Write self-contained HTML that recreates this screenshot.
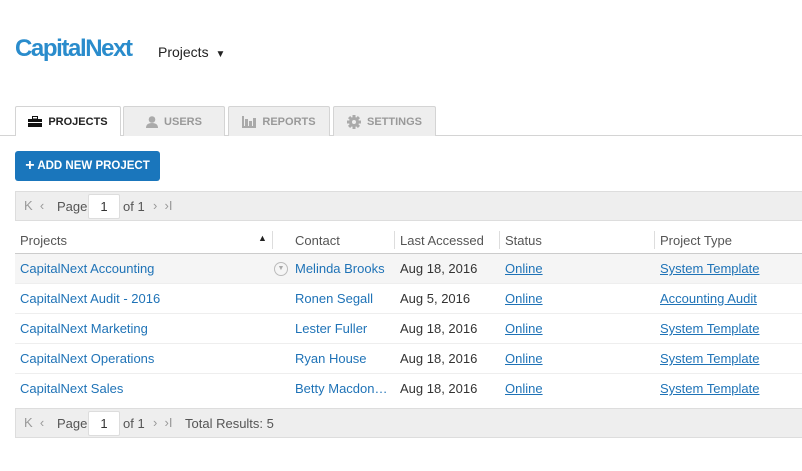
<!DOCTYPE html>
<html><head><style>
*{margin:0;padding:0;box-sizing:border-box}
body{width:802px;height:471px;overflow:hidden;background:#fff;font-family:"Liberation Sans",sans-serif;font-size:13px;color:#333;position:relative}
.a{position:absolute;white-space:nowrap}
.logo{left:15px;top:35px;font-size:24px;font-weight:bold;color:#2a8ccc;letter-spacing:-1.4px}
.tab{position:absolute;top:106px;height:30px;border:1px solid #d4d4d4;border-bottom:none;background:#eee;color:#999;font-size:11px;font-weight:bold;display:flex;align-items:center;justify-content:center;gap:6px;border-radius:2px 2px 0 0}
.tab.on{background:#fff;color:#222;height:30px;z-index:2}
.pager{position:absolute;left:15px;width:800px;height:30px;background:#eee;border:1px solid #ddd;color:#555;font-size:13px}
.inp{position:absolute;left:72px;top:2px;width:32px;height:25px;background:#fff;border:1px solid #ddd;border-radius:2px;text-align:center;line-height:23px;color:#333}
.lnk{color:#1f73b7}
.u{text-decoration:underline}
.row{position:absolute;left:15px;width:787px;height:30px;border-bottom:1px solid #eee}
.row span{position:absolute;top:7px}
</style></head><body>
<div class="a logo">CapitalNext</div>
<div class="a" style="left:158px;top:44px;font-size:14px;color:#222">Projects <span style="font-size:10px;margin-left:3px">▼</span></div>
<div class="a" style="left:0;top:135px;width:802px;height:1px;background:#d4d4d4"></div>
<div class="tab on" style="left:15px;width:106px"><svg width="14" height="11" viewBox="0 0 14 11"><rect x="4.5" y="0.5" width="5" height="2.5" fill="none" stroke="#111"/><rect x="0" y="3" width="14" height="8" fill="#111"/><rect x="0" y="6" width="14" height="1" fill="#fff"/></svg>PROJECTS</div>
<div class="tab" style="left:123px;width:102px"><svg width="12" height="12" viewBox="0 0 12 12"><circle cx="6" cy="3.5" r="3.3" fill="#aaa"/><path d="M0 12 Q0 7 6 7 Q12 7 12 12Z" fill="#aaa"/></svg>USERS</div>
<div class="tab" style="left:228px;width:102px"><svg width="14" height="12" viewBox="0 0 14 12"><rect x="0" y="0" width="2" height="12" fill="#aaa"/><rect x="3" y="3" width="3" height="8" fill="#aaa"/><rect x="7" y="5" width="3" height="6" fill="#aaa"/><rect x="11" y="2" width="3" height="9" fill="#aaa"/><rect x="0" y="10" width="14" height="2" fill="#aaa"/></svg>REPORTS</div>
<div class="tab" style="left:333px;width:103px"><svg width="14" height="14" viewBox="0 0 14 14"><g fill="#aaa"><circle cx="7" cy="7" r="5"/><rect x="5.5" y="0" width="3" height="14"/><rect x="0" y="5.5" width="14" height="3"/><rect x="5.5" y="0" width="3" height="14" transform="rotate(45 7 7)"/><rect x="5.5" y="0" width="3" height="14" transform="rotate(-45 7 7)"/></g><circle cx="7" cy="7" r="2" fill="#eee"/></svg>SETTINGS</div>
<div class="a" style="left:15px;top:151px;width:145px;height:30px;background:#1a76bc;border-radius:3px;color:#fff;font-size:11.5px;font-weight:bold;line-height:30px;text-align:center"><span style="font-size:16px;vertical-align:-1px">+</span> ADD NEW PROJECT</div>
<div class="pager" style="top:191px">
<span class="a" style="left:8px;top:6px;color:#999">K&nbsp; ‹</span><span class="a" style="left:41px;top:7px">Page</span><div class="inp">1</div><span class="a" style="left:107px;top:7px">of 1</span><span class="a" style="left:137px;top:6px;color:#999">›&nbsp; ›I</span>
</div>
<div class="a" style="left:20px;top:233px;color:#555">Projects</div>
<div class="a" style="left:258px;top:233px;font-size:9px;color:#222">▲</div>
<div class="a" style="left:272px;top:231px;width:1px;height:18px;background:#ddd"></div>
<div class="a" style="left:295px;top:233px;color:#555">Contact</div>
<div class="a" style="left:394px;top:231px;width:1px;height:18px;background:#ddd"></div>
<div class="a" style="left:400px;top:233px;color:#555">Last Accessed</div>
<div class="a" style="left:499px;top:231px;width:1px;height:18px;background:#ddd"></div>
<div class="a" style="left:505px;top:233px;color:#555">Status</div>
<div class="a" style="left:654px;top:231px;width:1px;height:18px;background:#ddd"></div>
<div class="a" style="left:660px;top:233px;color:#555">Project Type</div>
<div class="a" style="left:15px;top:253px;width:787px;height:1px;background:#ccc"></div>
<div class="row" style="top:254px;background:#f5f5f5"><span class="lnk" style="left:5px">CapitalNext Accounting</span><span style="left:259px;top:8px;width:14px;height:14px;border:1px solid #bbb;border-radius:50%;font-size:7px;color:#aaa;text-align:center;line-height:12px">▼</span><span class="lnk" style="left:280px">Melinda Brooks</span><span style="left:385px">Aug 18, 2016</span><span class="lnk u" style="left:490px">Online</span><span class="lnk u" style="left:645px">System Template</span></div>
<div class="row" style="top:284px"><span class="lnk" style="left:5px">CapitalNext Audit - 2016</span><span class="lnk" style="left:280px">Ronen Segall</span><span style="left:385px">Aug 5, 2016</span><span class="lnk u" style="left:490px">Online</span><span class="lnk u" style="left:645px">Accounting Audit</span></div>
<div class="row" style="top:314px"><span class="lnk" style="left:5px">CapitalNext Marketing</span><span class="lnk" style="left:280px">Lester Fuller</span><span style="left:385px">Aug 18, 2016</span><span class="lnk u" style="left:490px">Online</span><span class="lnk u" style="left:645px">System Template</span></div>
<div class="row" style="top:344px"><span class="lnk" style="left:5px">CapitalNext Operations</span><span class="lnk" style="left:280px">Ryan House</span><span style="left:385px">Aug 18, 2016</span><span class="lnk u" style="left:490px">Online</span><span class="lnk u" style="left:645px">System Template</span></div>
<div class="row" style="top:374px;border:none"><span class="lnk" style="left:5px">CapitalNext Sales</span><span class="lnk" style="left:280px">Betty Macdon…</span><span style="left:385px">Aug 18, 2016</span><span class="lnk u" style="left:490px">Online</span><span class="lnk u" style="left:645px">System Template</span></div>
<div class="pager" style="top:408px">
<span class="a" style="left:8px;top:6px;color:#999">K&nbsp; ‹</span><span class="a" style="left:41px;top:7px">Page</span><div class="inp">1</div><span class="a" style="left:107px;top:7px">of 1</span><span class="a" style="left:137px;top:6px;color:#999">›&nbsp; ›I</span><span class="a" style="left:169px;top:7px">Total Results: 5</span>
</div>
</body></html>
